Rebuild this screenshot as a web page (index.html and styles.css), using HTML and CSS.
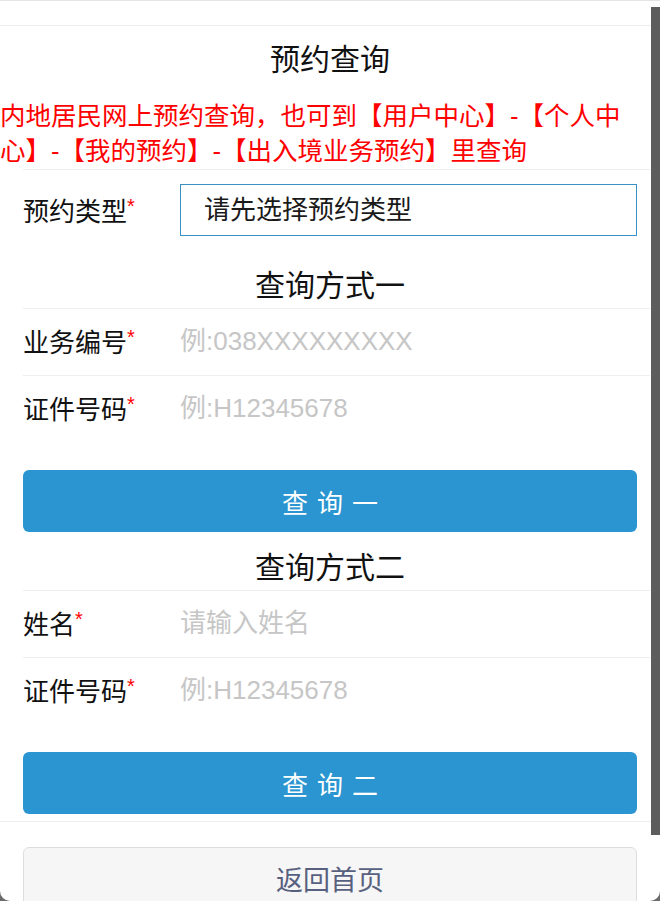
FILE: index.html
```html
<!DOCTYPE html>
<html lang="zh-CN">
<head>
<meta charset="utf-8">
<title>预约查询</title>
<link rel="stylesheet" href="styles.css">
</head>
<body>
<div class="panel">
  <div class="topbar"></div>
  <h1 class="title">预约查询</h1>
  <p class="notice">内地居民网上预约查询，也可到【用户中心】-【个人中心】-【我的预约】-【出入境业务预约】里查询</p>
  <div class="row row-select">
    <label class="label">预约类型<i>*</i></label>
    <div class="select">请先选择预约类型</div>
  </div>
  <h2 class="sub sub-first">查询方式一</h2>
  <div class="row">
    <label class="label">业务编号<i>*</i></label>
    <input class="input" type="text" placeholder="例:038XXXXXXXXX">
  </div>
  <div class="row">
    <label class="label">证件号码<i>*</i></label>
    <input class="input" type="text" placeholder="例:H12345678">
  </div>
  <button class="btn">查询一</button>
  <h2 class="sub">查询方式二</h2>
  <div class="row">
    <label class="label">姓名<i>*</i></label>
    <input class="input" type="text" placeholder="请输入姓名">
  </div>
  <div class="row">
    <label class="label">证件号码<i>*</i></label>
    <input class="input" type="text" placeholder="例:H12345678">
  </div>
  <button class="btn">查询二</button>
  <div class="footer">
    <button class="back">返回首页</button>
  </div>
  <div class="scrollbar"></div>
</div>
</body>
</html>
```
FILE: styles.css
```css
html, body {
  margin: 0;
  padding: 0;
  background: #6a6a6a;
}
body {
  font-family: "Liberation Sans", "Noto Sans CJK SC", sans-serif;
  color: #1a1a1a;
}
.panel {
  position: relative;
  width: 660px;
  height: 901px;
  box-sizing: border-box;
  background: #fff;
  border-top: 1px solid #e4e4e4;
  border-radius: 0 0 10px 10px;
  overflow: hidden;
}
.topbar {
  height: 24px;
  border-bottom: 1px solid #eeeeee;
}
.title {
  margin: 0;
  padding: 14px 0 19px;
  font-size: 30px;
  font-weight: normal;
  line-height: 40px;
  text-align: center;
  color: #111;
}
.notice {
  margin: 0;
  padding: 0 20px 0 0;
  font-size: 25.5px;
  line-height: 35px;
  color: #ff0000;
}
.row {
  display: flex;
  align-items: center;
  height: 64px;
  padding-bottom: 2px;
  margin: 0 10px 0 23px;
  border-top: 1px solid #eeeeee;
}
.row-select {
  height: auto;
  padding-top: 14px;
  padding-bottom: 0;
}
.label {
  width: 157px;
  flex: none;
  font-size: 26px;
  line-height: 32px;
  padding-bottom: 3px;
  color: #111;
  white-space: nowrap;
}
.label i {
  font-style: normal;
  color: #ff0000;
  font-size: 20px;
  vertical-align: 8px;
}
.select {
  flex: 1;
  height: 50px;
  margin-right: 13px;
  border: 1px solid #3a8fc4;
  padding-left: 23px;
  font-size: 26px;
  line-height: 50px;
  color: #1a1a1a;
}
.input {
  flex: 1;
  min-width: 0;
  border: none;
  outline: none;
  padding: 0;
  background: transparent;
  font-family: inherit;
  font-size: 26px;
  color: #1a1a1a;
}
.input::placeholder {
  color: #c6c6c6;
}
.sub {
  margin: 0;
  padding: 16px 0 2px;
  font-size: 30px;
  font-weight: normal;
  line-height: 40px;
  text-align: center;
  color: #111;
}
.sub-first {
  padding-top: 30px;
}
.btn {
  display: block;
  width: 614px;
  height: 62px;
  margin: 28px 0 0 23px;
  border: none;
  border-radius: 6px;
  background: #2a95d0;
  color: #fff;
  font-family: inherit;
  font-size: 26px;
  letter-spacing: 9px;
  padding: 0 0 0 9px;
}
.footer {
  margin-top: 7px;
  border-top: 1px solid #eeeeee;
  padding-top: 25px;
}
.back {
  display: block;
  width: 614px;
  height: 62px;
  margin-left: 23px;
  border: 1px solid #dddddd;
  border-radius: 6px;
  background: #f6f6f6;
  color: #58607f;
  font-family: inherit;
  font-size: 27px;
  padding: 0;
}
.scrollbar {
  position: absolute;
  top: 6px;
  right: 0;
  width: 9px;
  height: 828px;
  background: #5d5d5d;
}
```
